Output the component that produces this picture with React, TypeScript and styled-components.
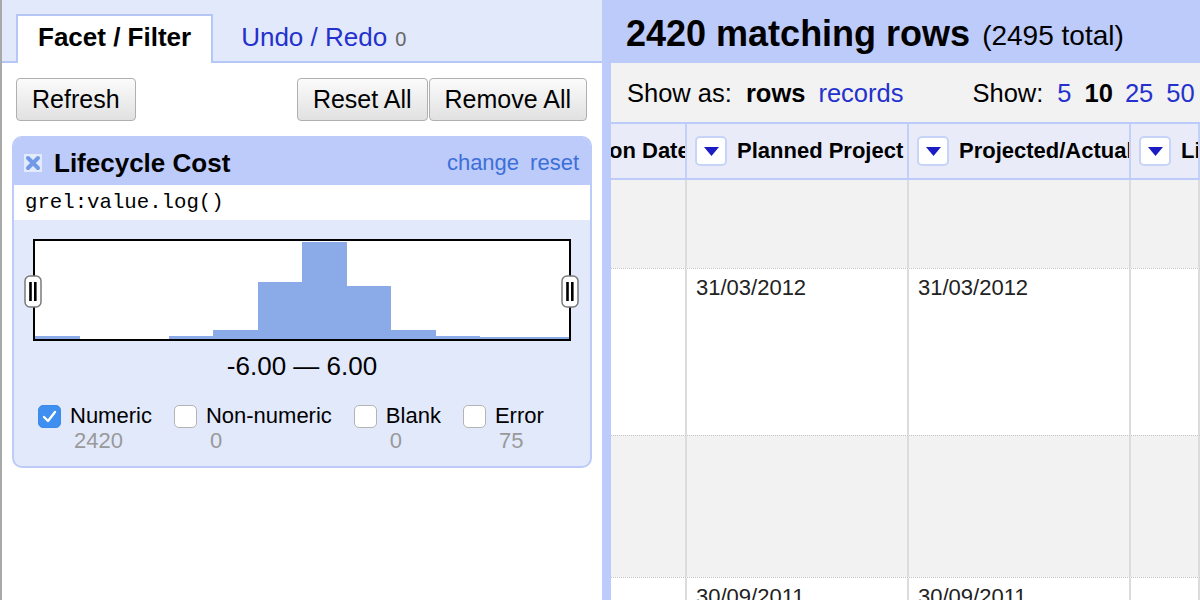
import React from 'react';
import styled, { createGlobalStyle } from 'styled-components';

const Global = createGlobalStyle`
  *, *::before, *::after { box-sizing: border-box; }
  html, body { margin: 0; padding: 0; background: #fff; }
  body { font-family: "Liberation Sans", Arial, Helvetica, sans-serif; color: #000; }
  #root { width: 1200px; height: 600px; }
`;

const Page = styled.div`
  display: flex;
  width: 1200px;
  height: 600px;
  overflow: hidden;
`;

const LeftPanel = styled.div`
  width: 602px;
  flex: none;
  border-left: 2px solid #a9a9a9;
  display: flex;
  flex-direction: column;
  background: #fff;
`;

const TabStrip = styled.div`
  height: 63px;
  background: #e2e9fb;
  border-bottom: 2px solid #b5c7f6;
  display: flex;
  align-items: flex-end;
  padding-left: 14px;
`;

const Tab = styled.div<{ $active?: boolean }>`
  height: 49px;
  margin-bottom: -2px;
  margin-right: 6px;
  padding: 0 20px 5px;
  display: flex;
  align-items: center;
  font-size: 26px;
  font-weight: ${(p) => (p.$active ? 700 : 400)};
  color: ${(p) => (p.$active ? '#000' : '#2431cc')};
  background: ${(p) => (p.$active ? '#fff' : 'transparent')};
  border: 2px solid ${(p) => (p.$active ? '#b5c7f6' : 'transparent')};
  border-bottom: none;
`;

const TabCount = styled.span`
  font-size: 20px;
  color: #666;
  margin-left: 8px;
  margin-top: 4px;
`;

const Toolbar = styled.div`
  display: flex;
  justify-content: space-between;
  padding: 15px 15px 15px 14px;
`;

const ButtonGroup = styled.div`
  display: flex;
  gap: 1px;
`;

const Button = styled.button`
  height: 43px;
  padding: 0 15px;
  font-family: inherit;
  font-size: 25px;
  color: #000;
  border: 1px solid #b0b0b0;
  border-radius: 4px;
  background: linear-gradient(#fbfbfb, #e1e1e1);
`;

const Card = styled.div`
  margin: 0 10px;
  border: 2px solid #bccbf9;
  border-radius: 10px;
  overflow: hidden;
  background: #e2e9fb;
`;

const CardHeader = styled.div`
  height: 47px;
  background: #bccbf9;
  display: flex;
  align-items: center;
  padding: 3px 11px 0 10px;
`;

const CardTitle = styled.span`
  font-size: 26px;
  font-weight: 700;
  margin-left: 12px;
`;

const HeaderLinks = styled.div`
  margin-left: auto;
  display: flex;
  gap: 11px;
  font-size: 22px;
  color: #3d6fd8;
`;

const Expression = styled.div`
  height: 35px;
  background: #fff;
  display: flex;
  align-items: center;
  padding-left: 11px;
  font-family: "Liberation Mono", "Courier New", monospace;
  font-size: 20.7px;
`;

const CardBody = styled.div`
  padding: 19px 19px 13px;
`;

const HistogramBox = styled.div`
  position: relative;
  height: 102px;
  border: 2px solid #000;
  background: #fff;
  display: flex;
  align-items: flex-end;
`;

const Bar = styled.div`
  flex: 1;
  background: #8aabe8;
`;

const Handle = styled.svg<{ $side: 'left' | 'right' }>`
  position: absolute;
  top: 34px;
  ${(p) => (p.$side === 'left' ? 'left: -11px;' : 'right: -10px;')}
`;

const RangeLabel = styled.div`
  margin-top: 10px;
  text-align: center;
  font-size: 26px;
  line-height: 30px;
`;

const Options = styled.div`
  display: flex;
  gap: 22px;
  margin: 22px 0 0 5px;
`;

const Option = styled.div`
  display: grid;
  grid-template-columns: 23px auto;
  column-gap: 9px;
  font-size: 22px;
`;

const Check = styled.span<{ $checked?: boolean }>`
  width: 23px;
  height: 23px;
  align-self: center;
  border-radius: 5px;
  border: 1px solid ${(p) => (p.$checked ? '#3b8bea' : '#b4b4b4')};
  background: ${(p) => (p.$checked ? '#3f8ff0' : '#fff')};
  display: flex;
  align-items: center;
  justify-content: center;
`;

const OptionLabel = styled.span`
  line-height: 26px;
`;

const OptionCount = styled.span`
  grid-column: 2;
  line-height: 24px;
  padding-left: 4px;
  color: #999;
`;

const RightPanel = styled.div`
  flex: 1;
  background: #bccbf9;
  display: flex;
  flex-direction: column;
  min-width: 0;
`;

const Summary = styled.div`
  height: 63px;
  flex: none;
  padding: 4px 0 0 24px;
  display: flex;
  align-items: center;
  white-space: nowrap;
`;

const SummaryTitle = styled.span`
  font-size: 36px;
  font-weight: 700;
`;

const SummaryTotal = styled.span`
  font-size: 28px;
  margin-left: 12px;
  margin-top: 4px;
`;

const Content = styled.div`
  flex: 1;
  margin-left: 9px;
  background: #fff;
  display: flex;
  flex-direction: column;
  overflow: hidden;
`;

const ViewBar = styled.div`
  height: 59px;
  flex: none;
  background: #f2f2f2;
  display: flex;
  align-items: center;
  padding: 2px 0 0 16px;
  font-size: 25.5px;
  white-space: nowrap;
`;

const ViewItem = styled.span<{ $current?: boolean; $gap?: number }>`
  margin-left: ${(p) => p.$gap ?? 13}px;
  font-weight: ${(p) => (p.$current ? 700 : 400)};
  color: ${(p) => (p.$current ? '#000' : '#2431cc')};
`;

const ViewLabel = styled.span<{ $gap?: number }>`
  margin-left: ${(p) => p.$gap ?? 0}px;
`;

const Columns = `
  display: grid;
  grid-template-columns: 76px 222px 222px 1fr;
`;

const HeaderRow = styled.div`
  ${Columns}
  height: 58px;
  flex: none;
  background: #e9ecf8;
  border-top: 2px solid #bccbf9;
  border-bottom: 2px solid #bccbf9;
`;

const HeaderCell = styled.div<{ $first?: boolean }>`
  display: flex;
  align-items: center;
  gap: 10px;
  padding-left: ${(p) => (p.$first ? 0 : 8)}px;
  border-right: 2px solid #c3d0f8;
  font-size: 22px;
  font-weight: 700;
  white-space: nowrap;
  overflow: hidden;
`;

const ClippedName = styled.span`
  margin-left: -2px;
`;

const Dropdown = styled.span`
  flex: none;
  width: 32px;
  height: 30px;
  background: #fff;
  border: 2px solid #c7d4f8;
  border-radius: 5px;
  display: flex;
  align-items: center;
  justify-content: center;
`;

const DataRow = styled.div<{ $odd?: boolean; $h?: number }>`
  ${Columns}
  height: ${(p) => (p.$h ? `${p.$h}px` : 'auto')};
  flex: ${(p) => (p.$h ? 'none' : '1')};
  background: ${(p) => (p.$odd ? '#f2f2f2' : '#fff')};
  & + & { border-top: 1px dotted #c4c4c4; }
`;

const DataCell = styled.div`
  border-right: 2px solid #dcdcdc;
  padding: 6px 9px;
  font-size: 22px;
  line-height: 26px;
  color: #222;
  white-space: nowrap;
  overflow: hidden;
`;

const bins = [3, 0, 0, 3, 9, 57, 97, 53, 9, 3, 2, 2];

const RemoveIcon = () => (
  <svg width="18" height="18" viewBox="0 0 18 18">
    <rect x="0" y="0" width="18" height="18" fill="#e3eafb" />
    <path d="M4 4 L14 14 M14 4 L4 14" stroke="#7099e8" strokeWidth="4" strokeLinecap="round" />
  </svg>
);

const HandleIcon = ({ side }: { side: 'left' | 'right' }) => (
  <Handle $side={side} width="18" height="33" viewBox="0 0 18 33">
    <rect x="1" y="1" width="16" height="31" rx="5" fill="#fff" stroke="#7a7a7a" strokeWidth="1.5" />
    <rect x="5.2" y="7" width="2.6" height="19" fill="#000" />
    <rect x="10" y="7" width="2.6" height="19" fill="#000" />
  </Handle>
);

const CheckMark = () => (
  <svg width="15" height="13" viewBox="0 0 15 13">
    <path d="M2 7 L6 11 L13 2" fill="none" stroke="#fff" strokeWidth="2.4" strokeLinecap="round" strokeLinejoin="round" />
  </svg>
);

const Triangle = () => (
  <svg width="15" height="9" viewBox="0 0 15 9">
    <polygon points="0,0 15,0 7.5,9" fill="#1c1cc4" />
  </svg>
);

const options = [
  { label: 'Numeric', count: '2420', checked: true },
  { label: 'Non-numeric', count: '0' },
  { label: 'Blank', count: '0' },
  { label: 'Error', count: '75' },
];

const rows: { h?: number; odd: boolean; a: string; b: string }[] = [
  { h: 88, odd: true, a: '', b: '' },
  { h: 167, odd: false, a: '31/03/2012', b: '31/03/2012' },
  { h: 142, odd: true, a: '', b: '' },
  { odd: false, a: '30/09/2011', b: '30/09/2011' },
];

export default function App() {
  return (
    <>
      <Global />
      <Page>
        <LeftPanel>
          <TabStrip>
            <Tab $active>Facet / Filter</Tab>
            <Tab>
              Undo / Redo<TabCount>0</TabCount>
            </Tab>
          </TabStrip>
          <Toolbar>
            <Button>Refresh</Button>
            <ButtonGroup>
              <Button>Reset All</Button>
              <Button>Remove All</Button>
            </ButtonGroup>
          </Toolbar>
          <Card>
            <CardHeader>
              <RemoveIcon />
              <CardTitle>Lifecycle Cost</CardTitle>
              <HeaderLinks>
                <span>change</span>
                <span>reset</span>
              </HeaderLinks>
            </CardHeader>
            <Expression>grel:value.log()</Expression>
            <CardBody>
              <HistogramBox>
                {bins.map((h, i) => (
                  <Bar key={i} style={{ height: h }} />
                ))}
                <HandleIcon side="left" />
                <HandleIcon side="right" />
              </HistogramBox>
              <RangeLabel>-6.00 — 6.00</RangeLabel>
              <Options>
                {options.map((o) => (
                  <Option key={o.label}>
                    <Check $checked={o.checked}>{o.checked && <CheckMark />}</Check>
                    <OptionLabel>{o.label}</OptionLabel>
                    <OptionCount>{o.count}</OptionCount>
                  </Option>
                ))}
              </Options>
            </CardBody>
          </Card>
        </LeftPanel>
        <RightPanel>
          <Summary>
            <SummaryTitle>2420 matching rows</SummaryTitle>
            <SummaryTotal>(2495 total)</SummaryTotal>
          </Summary>
          <Content>
            <ViewBar>
              <ViewLabel>Show as:</ViewLabel>
              <ViewItem $current $gap={14}>rows</ViewItem>
              <ViewItem>records</ViewItem>
              <ViewLabel $gap={69}>Show:</ViewLabel>
              <ViewItem $gap={14}>5</ViewItem>
              <ViewItem $current>10</ViewItem>
              <ViewItem $gap={12}>25</ViewItem>
              <ViewItem $gap={13}>50</ViewItem>
            </ViewBar>
            <HeaderRow>
              <HeaderCell $first>
                <ClippedName>on Date</ClippedName>
              </HeaderCell>
              <HeaderCell>
                <Dropdown><Triangle /></Dropdown>
                Planned Project
              </HeaderCell>
              <HeaderCell>
                <Dropdown><Triangle /></Dropdown>
                Projected/Actual
              </HeaderCell>
              <HeaderCell>
                <Dropdown><Triangle /></Dropdown>
                Lifecycle Cost
              </HeaderCell>
            </HeaderRow>
            {rows.map((r, i) => (
              <DataRow key={i} $odd={r.odd} $h={r.h}>
                <DataCell />
                <DataCell>{r.a}</DataCell>
                <DataCell>{r.b}</DataCell>
                <DataCell />
              </DataRow>
            ))}
          </Content>
        </RightPanel>
      </Page>
    </>
  );
}
